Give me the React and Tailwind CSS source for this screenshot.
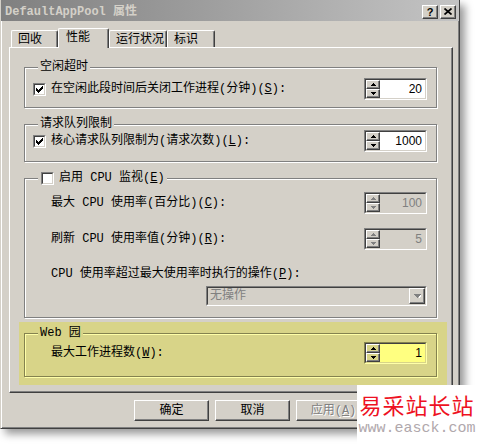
import React from "react";

const raised =
  "border border-t-white border-l-white border-r-[#404040] border-b-[#404040] shadow-[inset_-1px_-1px_0_#808080]";

const UpArrow = ({ c = "#000" }) => (
  <svg width="5" height="3" viewBox="0 0 5 3" shapeRendering="crispEdges">
    <path d="M2 0h1v1h1v1h1v1H0V2h1V1h1Z" fill={c} />
  </svg>
);

const DownArrow = ({ c = "#000" }) => (
  <svg width="5" height="3" viewBox="0 0 5 3" shapeRendering="crispEdges">
    <path d="M0 0h5v1H4v1H3v1H2V2H1V1H0Z" fill={c} />
  </svg>
);

const Check = ({ checked }) => (
  <span className="block w-[13px] h-[13px] shrink-0 border border-t-[#808080] border-l-[#808080] border-r-white border-b-white">
    <span className="flex items-center justify-center w-full h-full bg-white border border-t-[#404040] border-l-[#404040] border-r-[#d4d0c8] border-b-[#d4d0c8]">
      {checked && (
        <svg width="7" height="7" viewBox="0 0 7 7" shapeRendering="crispEdges">
          <path d="M6 0h1v3H6v1H5v1H4v1H3v1H2V6H1V5H0V2h1v1h1v1h1V3h1V2h1V1h1Z" fill="#000" />
        </svg>
      )}
    </span>
  </span>
);

const Spinner = ({ value, disabled, yellow }) => {
  const outer = yellow
    ? "border-t-[#84824f] border-l-[#84824f] border-r-[#ffffa8] border-b-[#ffffa8]"
    : "border-t-[#808080] border-l-[#808080] border-r-white border-b-white";
  const inner = yellow
    ? "border-r-[#d8d488] border-b-[#d8d488]"
    : "border-r-[#d4d0c8] border-b-[#d4d0c8]";
  const field = yellow ? "bg-[#ffff80] text-black" : disabled ? "bg-[#d4d0c8] text-[#808080]" : "bg-white text-black";
  const btn = yellow ? "bg-[#d8d488]" : "bg-[#d4d0c8]";
  const arrow = disabled ? "#808080" : "#000";
  return (
    <div className={`ml-auto w-[63px] h-[22px] shrink-0 border ${outer}`}>
      <div className={`flex h-full border border-t-[#404040] border-l-[#404040] ${inner}`}>
        <div className="flex flex-col w-[14px]">
          <span className={`flex items-center justify-center h-[10px] ${btn} ${raised}`}>
            <UpArrow c={arrow} />
          </span>
          <span className={`flex items-center justify-center h-[10px] ${btn} ${raised}`}>
            <DownArrow c={arrow} />
          </span>
        </div>
        <div className={`flex-1 flex items-center justify-end pr-[3px] font-['Liberation_Sans',sans-serif] text-[12px] ${field}`}>
          {value}
        </div>
      </div>
    </div>
  );
};

const Group = ({ legend, yellow, children, className = "" }) => (
  <fieldset
    className={`border pl-[8px] pr-[9px] ${
      yellow
        ? "border-[#84824f] shadow-[1px_1px_0_#ffffa8,inset_1px_1px_0_#ffffa8]"
        : "border-[#808080] shadow-[1px_1px_0_#fff,inset_1px_1px_0_#fff]"
    } ${className}`}
  >
    <legend className={`ml-[5px] px-[2px] leading-[12px] ${yellow ? "bg-[#d8d488]" : "bg-[#d4d0c8]"}`}>
      {legend}
    </legend>
    {children}
  </fieldset>
);

const Tab = ({ children, width, active }) =>
  active ? (
    <div
      className={`relative ${width} h-[20px] -mb-px pl-[7px] pt-[3px] bg-[#d4d0c8] rounded-t-[2px] border border-b-0 border-t-white border-l-white border-r-[#404040] shadow-[inset_-1px_0_0_#808080]`}
    >
      {children}
    </div>
  ) : (
    <div
      className={`${width} h-[17px] pl-[6px] pt-[3px] bg-[#d4d0c8] rounded-t-[2px] border border-b-0 border-t-white border-l-white border-r-[#404040] shadow-[inset_-1px_0_0_#808080]`}
    >
      {children}
    </div>
  );

const Button = ({ children, disabled }) => (
  <div
    className={`w-[75px] h-[21px] flex items-center justify-center bg-[#d4d0c8] ${raised} ${
      disabled ? "text-[#808080] [text-shadow:1px_1px_0_#fff]" : ""
    }`}
  >
    {children}
  </div>
);

export default function App() {
  return (
    <div className="relative w-[477px] h-[446px] bg-white overflow-hidden font-['Liberation_Mono','Noto_Sans_CJK_SC',monospace] text-[12px] leading-[12px] text-black">
      <div className="flex flex-col w-[460px] h-[429px] bg-[#d4d0c8] border border-t-0 border-l-[#d4d0c8] border-r-[#404040] border-b-[#404040] shadow-[inset_1px_0_0_#fff,inset_-1px_-1px_0_#808080,5px_5px_8px_rgba(0,0,0,0.4)]">
        {/* title bar */}
        <div className="h-[21px] flex items-center pl-[4px] pr-[3px] bg-linear-to-r from-[#808080] to-[#c4c4c4]">
          <span className="font-bold text-[#d4d0c8] pt-[3px]">DefaultAppPool 属性</span>
          <div className="ml-auto flex gap-[2px] pt-[2px]">
            <span className={`w-[16px] h-[14px] flex items-center justify-center bg-[#d4d0c8] font-['Liberation_Sans',sans-serif] font-bold text-[11px] ${raised}`}>
              ?
            </span>
            <span className={`w-[16px] h-[14px] flex items-center justify-center bg-[#d4d0c8] ${raised}`}>
              <svg width="8" height="7" viewBox="0 0 8 7">
                <path d="M0.5 0.5 L7.5 6.5 M7.5 0.5 L0.5 6.5" stroke="#000" strokeWidth="1.7" />
              </svg>
            </span>
          </div>
        </div>

        {/* tabs */}
        <div className="flex items-end h-[19px] mt-[7px] ml-[10px]">
          <Tab width="w-[47px]">回收</Tab>
          <Tab width="w-[51px]" active>
            性能
          </Tab>
          <Tab width="w-[58px]">运行状况</Tab>
          <Tab width="w-[48px]">标识</Tab>
        </div>

        {/* panel */}
        <div className="ml-[8px] w-[444px] h-[346px] pl-[14px] pr-[15px] border border-t-white border-l-white border-r-[#404040] border-b-[#404040] shadow-[inset_-1px_-1px_0_#808080]">
          <Group legend="空闲超时" className="mt-[13px] pb-[7px]">
            <div className="mt-[5px] h-[22px] flex items-center">
              <Check checked />
              <span className="ml-[5px]">
                在空闲此段时间后关闭工作进程(分钟)(<u>S</u>):
              </span>
              <Spinner value="20" />
            </div>
          </Group>

          <Group legend="请求队列限制" className="mt-[10px] pb-[9px]">
            <div className="h-[22px] flex items-center">
              <Check checked />
              <span className="ml-[5px]">
                核心请求队列限制为(请求次数)(<u>L</u>):
              </span>
              <Spinner value="1000" />
            </div>
          </Group>

          <fieldset className="mt-[10px] pb-[11px] pl-[8px] pr-[9px] border border-[#808080] shadow-[1px_1px_0_#fff,inset_1px_1px_0_#fff]">
            <legend className="ml-[5px] pl-[3px] pr-[2px] bg-[#d4d0c8]">
              <span className="flex items-center gap-[5px] leading-[13px]">
                <Check />
                <span>
                  启用 CPU 监视(<u>E</u>)
                </span>
              </span>
            </legend>
            <div className="mt-[7px] h-[22px] flex items-center pl-[18px]">
              <span>
                最大 CPU 使用率(百分比)(<u>C</u>):
              </span>
              <Spinner value="100" disabled />
            </div>
            <div className="mt-[14px] h-[22px] flex items-center pl-[18px]">
              <span>
                刷新 CPU 使用率值(分钟)(<u>R</u>):
              </span>
              <Spinner value="5" disabled />
            </div>
            <div className="mt-[18px] h-[12px] pl-[18px]">
              CPU 使用率超过最大使用率时执行的操作(<u>P</u>):
            </div>
            <div className="mt-[6px] ml-auto w-[221px] h-[20px] border border-t-[#808080] border-l-[#808080] border-r-white border-b-white">
              <div className="flex items-center h-full bg-[#d4d0c8] border border-t-[#404040] border-l-[#404040] border-r-[#d4d0c8] border-b-[#d4d0c8]">
                <span className="flex-1 pl-[2px] text-[#808080]">无操作</span>
                <span className={`w-[16px] h-[16px] flex items-center justify-center bg-[#d4d0c8] ${raised}`}>
                  <svg width="7" height="4" viewBox="0 0 7 4" shapeRendering="crispEdges">
                    <path d="M1 1h7v1H7v1H6v1H5V3H4V2H3V1Z" fill="#fff" />
                    <path d="M0 0h7v1H6v1H5v1H4v1H3V3H2V2H1V1H0Z" fill="#808080" />
                  </svg>
                </span>
              </div>
            </div>
          </fieldset>

          {/* highlighted web garden block */}
          <div className="mt-[4px] -ml-[5px] -mr-[10px] pl-[5px] pr-[10px] pt-[5px] pb-[8px] bg-[#d8d488]">
            <Group legend="Web 园" yellow className="pb-[12px]">
              <div className="mt-[3px] h-[22px] flex items-center pl-[18px]">
                <span>
                  最大工作进程数(<u>W</u>):
                </span>
                <Spinner value="1" yellow />
              </div>
            </Group>
          </div>
        </div>

        {/* buttons (the last one sits under the watermark) */}
        <div className="mt-[7px] flex justify-end gap-[6px] pr-[7px]">
          <Button>确定</Button>
          <Button>取消</Button>
          <Button disabled>
            应用(<u>A</u>)
          </Button>
          <Button />
        </div>
      </div>

      {/* watermark */}
      <div className="absolute left-[357px] top-[385px] w-[120px] h-[61px] bg-white flex flex-col items-center">
        <div className="mt-[7px] text-[22px] leading-[24px] tracking-[1px] text-[#ee1122] font-['Noto_Sans_CJK_SC',sans-serif]">
          易采站长站
        </div>
        <div className="mt-[6px] text-[15px] leading-[14px] text-[#b0a8ac] font-['Liberation_Mono',monospace]">
          www.easck.com
        </div>
      </div>
    </div>
  );
}
